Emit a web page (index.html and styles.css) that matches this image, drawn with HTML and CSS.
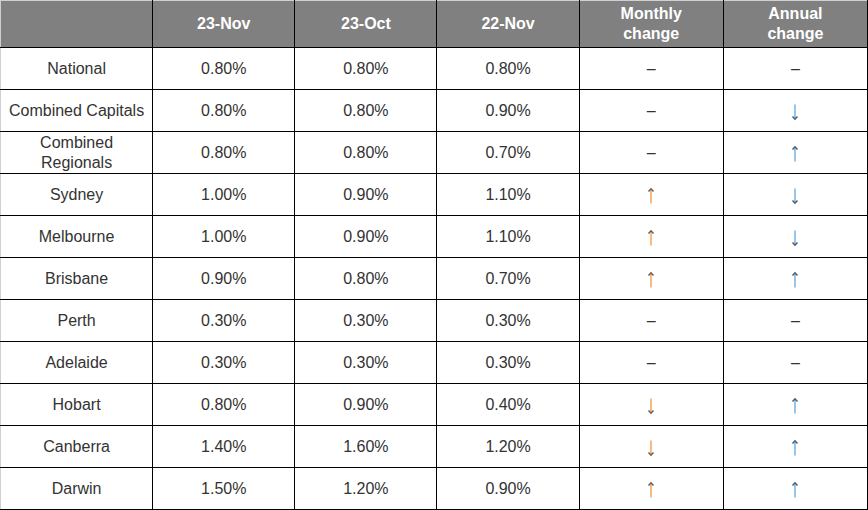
FILE: index.html
```html
<!DOCTYPE html>
<html>
<head>
<meta charset="utf-8">
<link rel="stylesheet" href="styles.css">
</head>
<body>
<table class="rates">
  <colgroup>
    <col class="c-name"><col class="c-v"><col class="c-v"><col class="c-v"><col class="c-ch"><col class="c-ch">
  </colgroup>
  <thead>
    <tr><th></th><th>23-Nov</th><th>23-Oct</th><th>22-Nov</th><th>Monthly<br>change</th><th>Annual<br>change</th></tr>
  </thead>
  <tbody>
    <tr><td>National</td><td>0.80%</td><td>0.80%</td><td>0.80%</td><td class="dash">–</td><td class="dash">–</td></tr>
    <tr><td>Combined Capitals</td><td>0.80%</td><td>0.80%</td><td>0.90%</td><td class="dash">–</td><td class="blue"><svg class="arr down" viewBox="0 0 8 16"><path class="shaft" d="M4 0.5V15"/><path class="head" d="M1.5 12.5L4 15.2L6.5 12.5"/></svg></td></tr>
    <tr><td>Combined<br>Regionals</td><td>0.80%</td><td>0.80%</td><td>0.70%</td><td class="dash">–</td><td class="blue"><svg class="arr" viewBox="0 0 8 16"><path class="shaft" d="M4 1V15.5"/><path class="head" d="M1.5 3.5L4 0.8L6.5 3.5"/></svg></td></tr>
    <tr><td>Sydney</td><td>1.00%</td><td>0.90%</td><td>1.10%</td><td class="orange"><svg class="arr" viewBox="0 0 8 16"><path class="shaft" d="M4 1V15.5"/><path class="head" d="M1.5 3.5L4 0.8L6.5 3.5"/></svg></td><td class="blue"><svg class="arr down" viewBox="0 0 8 16"><path class="shaft" d="M4 0.5V15"/><path class="head" d="M1.5 12.5L4 15.2L6.5 12.5"/></svg></td></tr>
    <tr><td>Melbourne</td><td>1.00%</td><td>0.90%</td><td>1.10%</td><td class="orange"><svg class="arr" viewBox="0 0 8 16"><path class="shaft" d="M4 1V15.5"/><path class="head" d="M1.5 3.5L4 0.8L6.5 3.5"/></svg></td><td class="blue"><svg class="arr down" viewBox="0 0 8 16"><path class="shaft" d="M4 0.5V15"/><path class="head" d="M1.5 12.5L4 15.2L6.5 12.5"/></svg></td></tr>
    <tr><td>Brisbane</td><td>0.90%</td><td>0.80%</td><td>0.70%</td><td class="orange"><svg class="arr" viewBox="0 0 8 16"><path class="shaft" d="M4 1V15.5"/><path class="head" d="M1.5 3.5L4 0.8L6.5 3.5"/></svg></td><td class="blue"><svg class="arr" viewBox="0 0 8 16"><path class="shaft" d="M4 1V15.5"/><path class="head" d="M1.5 3.5L4 0.8L6.5 3.5"/></svg></td></tr>
    <tr><td>Perth</td><td>0.30%</td><td>0.30%</td><td>0.30%</td><td class="dash">–</td><td class="dash">–</td></tr>
    <tr><td>Adelaide</td><td>0.30%</td><td>0.30%</td><td>0.30%</td><td class="dash">–</td><td class="dash">–</td></tr>
    <tr><td>Hobart</td><td>0.80%</td><td>0.90%</td><td>0.40%</td><td class="orange"><svg class="arr down" viewBox="0 0 8 16"><path class="shaft" d="M4 0.5V15"/><path class="head" d="M1.5 12.5L4 15.2L6.5 12.5"/></svg></td><td class="blue"><svg class="arr" viewBox="0 0 8 16"><path class="shaft" d="M4 1V15.5"/><path class="head" d="M1.5 3.5L4 0.8L6.5 3.5"/></svg></td></tr>
    <tr><td>Canberra</td><td>1.40%</td><td>1.60%</td><td>1.20%</td><td class="orange"><svg class="arr down" viewBox="0 0 8 16"><path class="shaft" d="M4 0.5V15"/><path class="head" d="M1.5 12.5L4 15.2L6.5 12.5"/></svg></td><td class="blue"><svg class="arr" viewBox="0 0 8 16"><path class="shaft" d="M4 1V15.5"/><path class="head" d="M1.5 3.5L4 0.8L6.5 3.5"/></svg></td></tr>
    <tr><td>Darwin</td><td>1.50%</td><td>1.20%</td><td>0.90%</td><td class="orange"><svg class="arr" viewBox="0 0 8 16"><path class="shaft" d="M4 1V15.5"/><path class="head" d="M1.5 3.5L4 0.8L6.5 3.5"/></svg></td><td class="blue"><svg class="arr" viewBox="0 0 8 16"><path class="shaft" d="M4 1V15.5"/><path class="head" d="M1.5 3.5L4 0.8L6.5 3.5"/></svg></td></tr>
  </tbody>
</table>
</body>
</html>
```
FILE: styles.css
```css
html, body {
  margin: 0;
  padding: 0;
  background: #fff;
}
.rates {
  width: 868px;
  border-collapse: collapse;
  table-layout: fixed;
  font-family: "Liberation Sans", Arial, sans-serif;
  font-size: 16px;
  color: #333;
  border-left: 1px solid #d0d0d0;
  border-top: 1px solid #d0d0d0;
}
.c-name { width: 152px; }
.c-v { width: 142px; }
.c-ch { width: 144px; }
.rates th {
  background: #808080;
  color: #fff;
  font-weight: bold;
  height: 46px;
  padding: 0;
  line-height: 20px;
  border-right: 1px solid #000;
  border-bottom: 1px solid #000;
  vertical-align: middle;
  text-align: center;
}
.rates td {
  height: 41px;
  padding: 0;
  line-height: 20px;
  text-align: center;
  vertical-align: middle;
  border-right: 1px solid #000;
  border-bottom: 1px solid #000;
}
.rates tr > :first-child {
  border-left: 1px solid #d0d0d0;
}
.dash { color: #333; }
.arr {
  display: inline-block;
  width: 8px;
  height: 16px;
  vertical-align: middle;
  margin-top: 2px;
  fill: none;
  stroke-width: 1.4;
}
.orange .arr .shaft { stroke: #f0a050; }
.blue .arr .shaft { stroke: #6aaee0; }
.orange .arr .head { stroke: #6a5a50; }
.blue .arr .head { stroke: #4a5a6a; }
```
